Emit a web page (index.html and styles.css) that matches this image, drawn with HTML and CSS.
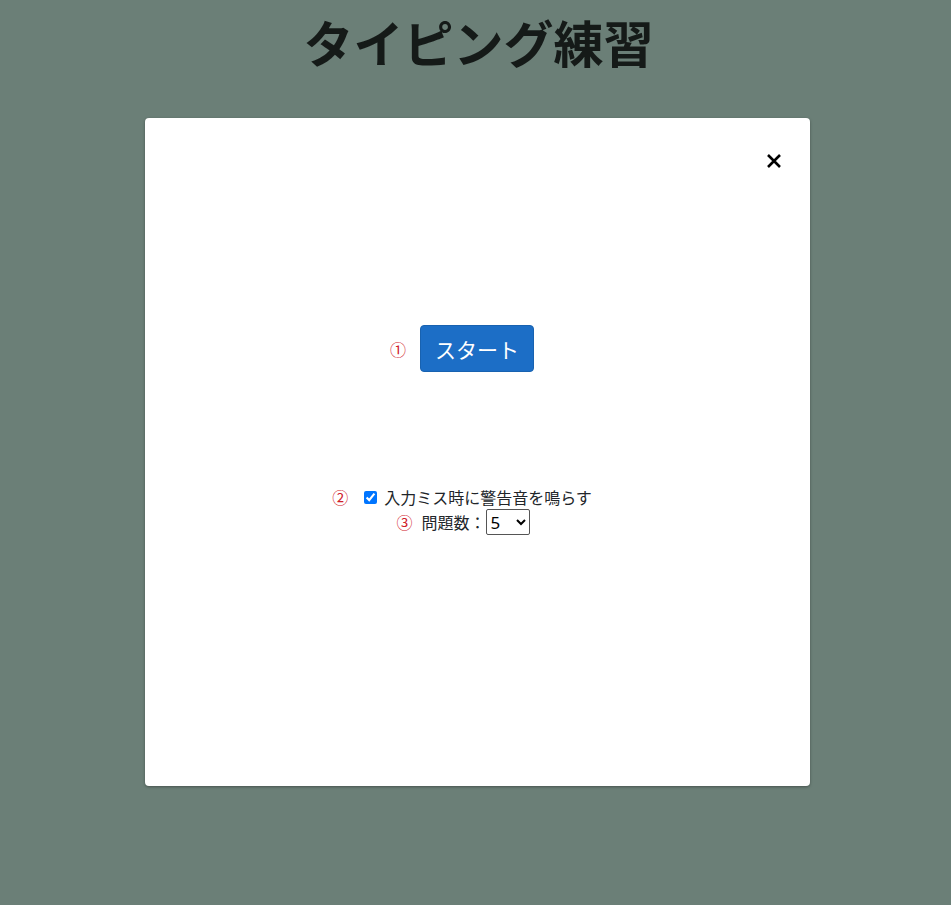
FILE: index.html
```html
<!DOCTYPE html>
<html lang="ja">
<head>
<meta charset="utf-8">
<link rel="stylesheet" href="styles.css">
</head>
<body>
<h1 class="title">タイピング練習</h1>
<div class="card">
  <button class="close" aria-label="閉じる">
    <svg width="16" height="16" viewBox="0 0 16 16"><path d="M2 2 L14 14 M14 2 L2 14" stroke="#000" stroke-width="2.6" stroke-linecap="butt"/></svg>
  </button>
  <div class="content">
    <div class="start-row">
      <span class="num">①</span>
      <button class="start">スタート</button>
    </div>
    <div class="options">
      <div class="opt-row row-check">
        <span class="num">②</span>
        <label class="check"><input type="checkbox" checked>入力ミス時に警告音を鳴らす</label>
      </div>
      <div class="opt-row row-count">
        <span class="num">③</span>
        <label class="count">問題数：<select><option>5</option><option>10</option></select></label>
      </div>
    </div>
  </div>
</div>
</body>
</html>
```
FILE: styles.css
```css
html, body {
  margin: 0;
  padding: 0;
}
body {
  background: #6b7f77;
  font-family: "Noto Sans CJK JP", "Noto Sans", sans-serif;
  color: #212529;
  min-height: 905px;
}
.title {
  margin: 0;
  padding-top: 8px;
  text-align: center;
  font-size: 50px;
  line-height: 66px;
  font-weight: 700;
  color: #151a18;
  letter-spacing: 0;
  padding-left: 6px;
}
.card {
  position: relative;
  width: 665px;
  height: 668px;
  margin: 44px 0 0 145px;
  background: #fff;
  border-radius: 4px;
  box-shadow: 0 1px 3px rgba(0,0,0,0.35);
  box-sizing: border-box;
}
.close {
  position: absolute;
  left: 621px;
  top: 35px;
  width: 16px;
  height: 16px;
  padding: 0;
  border: 0;
  background: none;
  display: block;
}
.close svg { display: block; }
.content {
  display: flex;
  flex-direction: column;
  align-items: center;
  padding-top: 207px;
  padding-right: 31px;
}
.start-row {
  display: flex;
  align-items: center;
  gap: 14px;
}
.num {
  color: #d0202a;
  font-size: 16px;
}
.start {
  width: 114px;
  height: 47px;
  background: #1c6ec6;
  color: #fff;
  border: 1px solid #1862b0;
  border-radius: 4px;
  font-family: inherit;
  font-size: 21px;
  padding: 0;
}
.options {
  margin-top: 113px;
  display: flex;
  flex-direction: column;
  align-items: center;
}
.opt-row {
  display: flex;
  align-items: center;
  font-size: 16px;
  line-height: 24px;
}
.row-check { gap: 16px; }
.row-count { gap: 9px; margin-left: 2px; }
.check {
  display: flex;
  align-items: center;
}
.check input {
  margin: 0 7px 0 0;
  width: 13px;
  height: 13px;
}
.count {
  display: flex;
  align-items: center;
}
.count select {
  height: 26px;
  width: 44px;
  font-size: 17px;
  font-family: "Noto Sans", sans-serif;
  border: 1px solid #555;
  border-radius: 2px;
  background: #fff;
  color: #000;
  margin-left: 0;
}
```
